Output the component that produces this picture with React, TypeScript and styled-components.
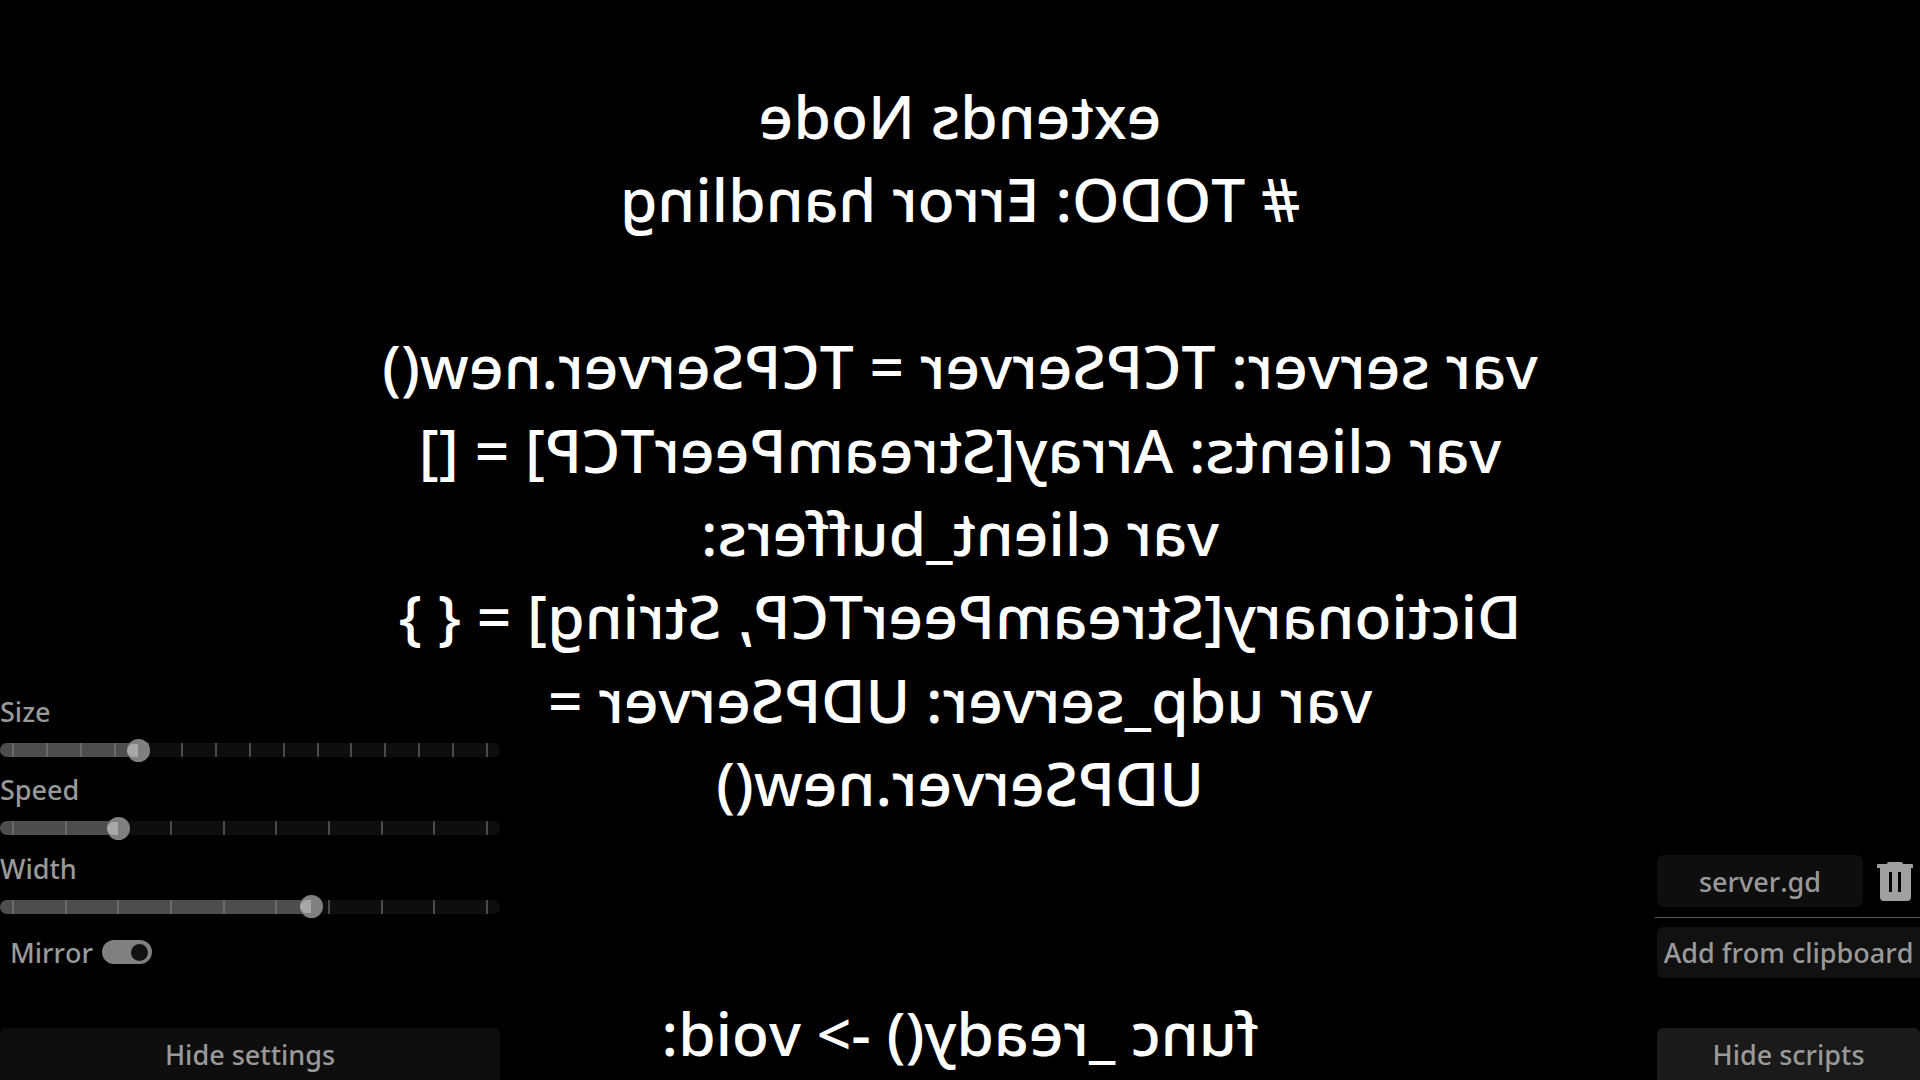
import React from "react";
import styled, { createGlobalStyle } from "styled-components";

const Global = createGlobalStyle`
  html, body { margin: 0; padding: 0; background: #000; height: 100%; overflow: hidden; }
  #root { height: 100%; }
  * { box-sizing: border-box; }
`;

const Page = styled.div`
  position: relative;
  width: 100vw;
  height: 100vh;
  overflow: hidden;
  background: #000;
  font-family: "Noto Sans", sans-serif;
  font-weight: 500;
  font-kerning: none;
`;

const Script = styled.div`
  padding-top: 74px;
  transform: scaleX(-1);
  color: #fff;
  font-size: 60.6px;
  line-height: 83.4px;
  text-align: center;
`;

const ScriptLine = styled.div`
  min-height: 83.4px;
  white-space: pre;
`;

const SettingsPanel = styled.div`
  position: absolute;
  left: 0;
  bottom: 0;
  width: 500px;
  display: flex;
  flex-direction: column;
  color: #999;
  font-size: 27px;
`;

const SliderBlock = styled.div`
  display: flex;
  flex-direction: column;
  height: 78.3px;
`;

const SliderLabel = styled.div`
  line-height: 26px;
  height: 44px;
`;

const Track = styled.div`
  position: relative;
  height: 14px;
  border-radius: 7px;
  background: #0e0e0e;
  display: flex;
  align-items: stretch;
  justify-content: space-between;
  padding: 0 12px;
`;

const Fill = styled.div`
  position: absolute;
  left: 0;
  top: 0;
  bottom: 0;
  border-radius: 7px 0 0 7px;
  background: #4d4d4d;
`;

const Tick = styled.span<{ $on: boolean }>`
  position: relative;
  width: 2px;
  background: ${(p) => (p.$on ? "#6a6a6a" : "#4a4a4a")};
`;

const Thumb = styled.div`
  position: absolute;
  top: -4.5px;
  width: 23px;
  height: 23px;
  margin-left: -11.5px;
  border-radius: 50%;
  background: #808080;
`;

const ThumbCore = styled.div`
  position: absolute;
  left: 0;
  top: 0;
  width: 12px;
  height: 23px;
  padding: 5px 0 0;
  &::before {
    content: "";
    display: block;
    width: 11.5px;
    height: 13px;
    border-radius: 6.5px 0 0 6.5px;
    background: #a8a8a8;
  }
`;

const MirrorRow = styled.div`
  display: flex;
  align-items: center;
  height: 24px;
  margin-top: 6px;
  padding-left: 10px;
  gap: 9px;
`;

const MirrorLabel = styled.span`
  padding-top: 2px;
  line-height: 26px;
`;

const Toggle = styled.div`
  width: 50px;
  height: 24px;
  border-radius: 12px;
  background: #808080;
  display: flex;
  align-items: center;
  justify-content: flex-end;
  padding-right: 4px;
`;

const ToggleKnob = styled.div`
  width: 17px;
  height: 17px;
  border-radius: 50%;
  background: #111;
`;

const HideButton = styled.div<{ $bg: string; $mt: number; $ml?: number }>`
  height: 52px;
  margin-top: ${(p) => p.$mt}px;
  margin-left: ${(p) => p.$ml ?? 0}px;
  border-radius: 6px 6px 0 0;
  background: ${(p) => p.$bg};
  color: #999;
  display: flex;
  align-items: center;
  justify-content: center;
`;

const ScriptsPanel = styled.div`
  position: absolute;
  right: 0;
  bottom: 0;
  width: 265px;
  display: flex;
  flex-direction: column;
  color: #999;
  font-size: 27px;
`;

const FileRow = styled.div`
  display: flex;
  align-items: center;
  justify-content: space-between;
  padding: 0 7px 0 2px;
  height: 52px;
`;

const FileButton = styled.div`
  width: 206px;
  height: 52px;
  border-radius: 6px;
  background: #0e0e0e;
  display: flex;
  align-items: center;
  justify-content: center;
`;

const Divider = styled.div`
  height: 1px;
  margin-top: 10px;
  background: #555;
`;

const AddButton = styled.div`
  height: 51px;
  margin: 9px 0 0 2px;
  border-radius: 6px 0 0 6px;
  background: #111;
  display: flex;
  align-items: center;
  justify-content: center;
  white-space: nowrap;
`;

const lines = [
  "extends Node",
  "# TODO: Error handling",
  "",
  "var server: TCPServer = TCPServer.new()",
  "var clients: Array[StreamPeerTCP] = []",
  "var client_buffers:",
  "Dictionary[StreamPeerTCP, String] = { }",
  "var udp_server: UDPServer =",
  "UDPServer.new()",
  "",
  "",
  "func _ready() -> void:",
];

const Slider = ({ label, at, ticks }: { label: string; at: number; ticks: number }) => {
  const positions = Array.from({ length: ticks }, (_, i) => 13 + (i * 474) / (ticks - 1));
  return (
    <SliderBlock>
      <SliderLabel>{label}</SliderLabel>
      <Track>
        <Fill style={{ width: at }} />
        {positions.map((x) => (
          <Tick key={x} $on={x < at} />
        ))}
        <Thumb style={{ left: at }}>
          <ThumbCore />
        </Thumb>
      </Track>
    </SliderBlock>
  );
};

const TrashIcon = () => (
  <svg width="36" height="39" viewBox="0 0 36 39" fill="#a0a0a0">
    <path d="M10 2 Q10 0 12 0 H24 Q26 0 26 2 H35 Q36 2 36 3 V6 H0 V3 Q0 2 1 2 Z" />
    <path
      fillRule="evenodd"
      d="M3 6 H34 V35 Q34 39 30 39 H7 Q3 39 3 35 Z M12 10 V30 H15 V10 Z M21 10 V30 H24 V10 Z"
    />
  </svg>
);

export default function App() {
  return (
    <Page>
      <Global />
      <Script>
        {lines.map((line, i) => (
          <ScriptLine key={i}>{line}</ScriptLine>
        ))}
      </Script>
      <SettingsPanel>
        <Slider label="Size" at={138} ticks={15} />
        <Slider label="Speed" at={118} ticks={10} />
        <Slider label="Width" at={311} ticks={10} />
        <MirrorRow>
          <MirrorLabel>Mirror</MirrorLabel>
          <Toggle>
            <ToggleKnob />
          </Toggle>
        </MirrorRow>
        <HideButton $bg="#0e0e0e" $mt={64}>Hide settings</HideButton>
      </SettingsPanel>
      <ScriptsPanel>
        <FileRow>
          <FileButton>server.gd</FileButton>
          <TrashIcon />
        </FileRow>
        <Divider />
        <AddButton>Add from clipboard</AddButton>
        <HideButton $bg="#1a1a1a" $mt={50} $ml={2}>Hide scripts</HideButton>
      </ScriptsPanel>
    </Page>
  );
}
